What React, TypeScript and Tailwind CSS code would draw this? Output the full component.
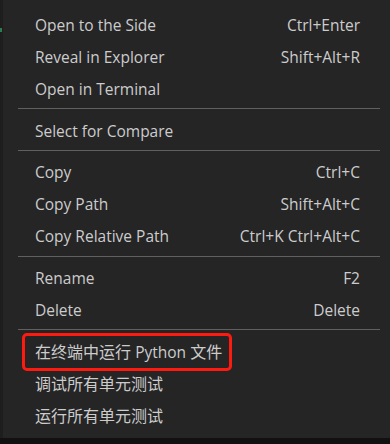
const groups: { label: string; keys?: string }[][] = [
  [
    { label: 'Open to the Side', keys: 'Ctrl+Enter' },
    { label: 'Reveal in Explorer', keys: 'Shift+Alt+R' },
    { label: 'Open in Terminal' },
  ],
  [{ label: 'Select for Compare' }],
  [
    { label: 'Copy', keys: 'Ctrl+C' },
    { label: 'Copy Path', keys: 'Shift+Alt+C' },
    { label: 'Copy Relative Path', keys: 'Ctrl+K Ctrl+Alt+C' },
  ],
  [
    { label: 'Rename', keys: 'F2' },
    { label: 'Delete', keys: 'Delete' },
  ],
];

const pythonItems = ['调试所有单元测试', '运行所有单元测试'];

function Separator() {
  return (
    <div className="h-[10px] pl-[15px] pr-[10px] pt-[3px]">
      <div className="h-px bg-[#606060]" />
    </div>
  );
}

export default function App() {
  return (
    <div className="flex h-[444px] w-[390px] flex-col bg-[#111111]">
      <div className="flex flex-1">
        <div className="relative w-[3px] bg-[#1e1e1e]">
          <div className="absolute left-0 top-[28px] h-[4px] w-[2px] bg-[#2e7d4f]" />
        </div>
        <div
          className="flex-1 bg-[#252526] pb-[5px] pt-[10px] text-[15.5px] text-[#cccccc]"
          style={{ fontFamily: '"Open Sans", "Noto Sans CJK SC", sans-serif' }}
        >
          {groups.map((items, gi) => (
            <div key={gi}>
              {items.map((it) => (
                <div key={it.label} className="flex h-[31.8px] items-center pl-[32px] pr-[30px]">
                  <span className="flex-1">{it.label}</span>
                  {it.keys && <span>{it.keys}</span>}
                </div>
              ))}
              <Separator />
            </div>
          ))}
          <div className="flex h-[31.8px] items-center pl-[19px] text-[16px]">
            <span className="rounded-[5px] border-[3px] border-[#ff1a0f] py-[4px] pl-[10px] pr-[7px]">
              在终端中运行 <span className="text-[15.5px]">Python</span> 文件
            </span>
          </div>
          {pythonItems.map((t) => (
            <div key={t} className="flex h-[31.8px] items-center pl-[32px] text-[16px]">
              {t}
            </div>
          ))}
        </div>
      </div>
      <div className="h-[6px]" />
    </div>
  );
}
